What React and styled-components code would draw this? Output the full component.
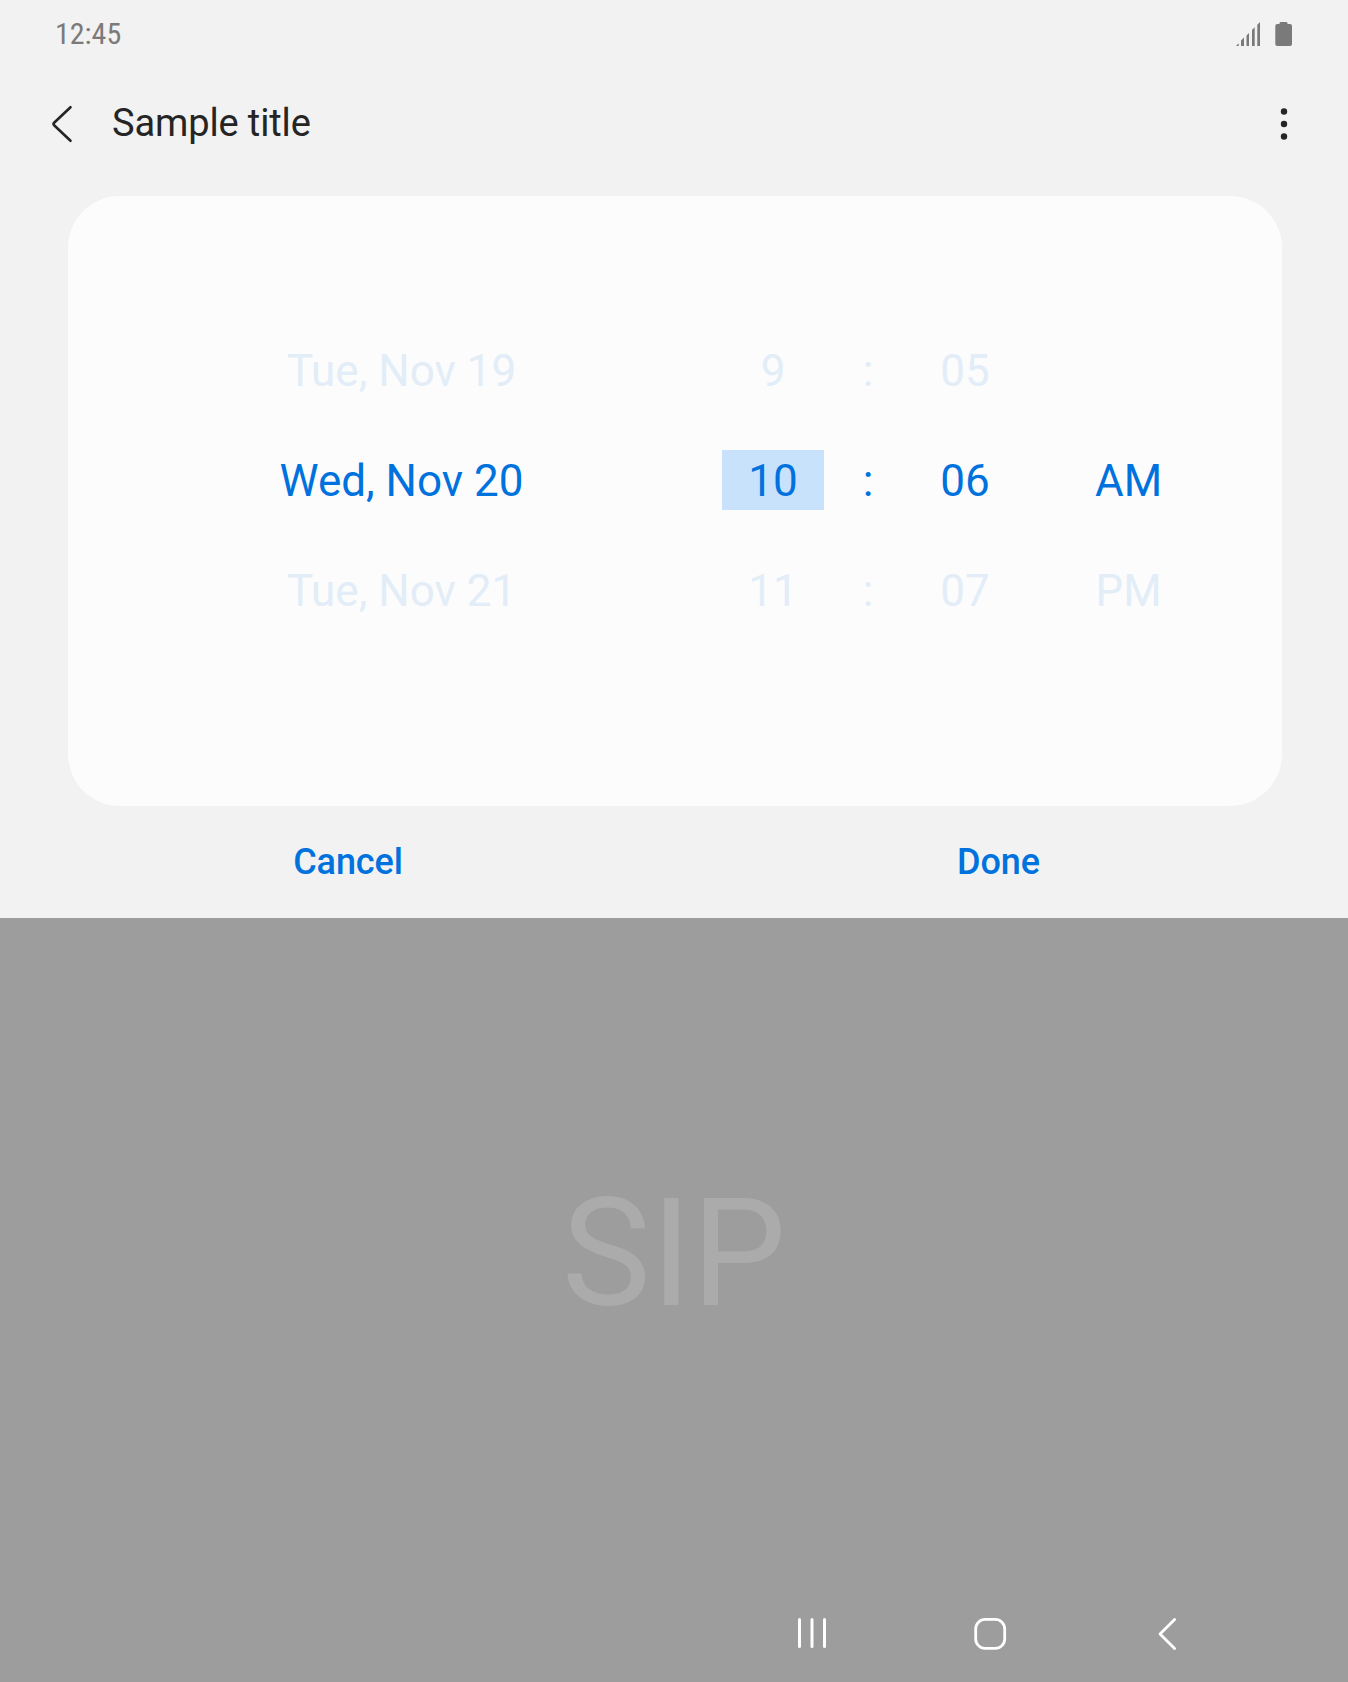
import React from "react";
import styled, { createGlobalStyle } from "styled-components";

const GlobalStyle = createGlobalStyle`
  *, *::before, *::after { box-sizing: border-box; }
  body { margin: 0; background: #9d9d9d; font-family: Roboto, sans-serif; }
  button { font: inherit; border: 0; background: none; padding: 0; color: inherit; }
`;

const Screen = styled.div`
  width: 1348px;
  height: 1682px;
  display: flex;
  flex-direction: column;
  overflow: hidden;
`;

const Sheet = styled.section`
  height: 918px;
  display: flex;
  flex-direction: column;
  background: #f2f2f2;
`;

const StatusBar = styled.div`
  height: 68px;
  padding: 0 56px 0 55px;
  display: flex;
  justify-content: space-between;
  align-items: center;
  color: #7a7a7a;
`;

const Clock = styled.span`
  font-family: "Roboto Condensed", Roboto, sans-serif;
  font-size: 30px;
  font-stretch: 75%;
  line-height: 68px;
`;

const StatusIcons = styled.div`
  display: flex;
  gap: 15px;
`;

const AppBar = styled.header`
  height: 128px;
  padding: 0 54px 16px 48px;
  display: flex;
  align-items: center;
  color: #252525;
`;

const Title = styled.h1`
  flex: 1;
  margin: -2px 0 0 36px;
  font-size: 38px;
  font-weight: 400;
  line-height: 112px;
  letter-spacing: -0.12px;
`;

const IconButton = styled.button`
  display: flex;
`;

const Icon = styled.svg`
  display: block;
  overflow: visible;
`;

const Card = styled.main`
  width: 1214px;
  height: 610px;
  margin-left: 68px;
  padding: 119px 0 0 13px;
  border-radius: 52px;
  background: #fcfcfc;
`;

const PickerRow = styled.div`
  height: 110px;
  display: grid;
  grid-template-columns: 641px 102px 88px 106px 221px;
  align-items: center;
  font-size: 44px;
  color: ${(p) => (p.$active ? "#0072de" : "#e2edf8")};
`;

const Cell = styled.div`
  height: 60px;
  line-height: 62px;
  text-align: center;
  white-space: nowrap;
  background: ${(p) => (p.$selected ? "#c9e2fc" : "transparent")};
`;

const Actions = styled.div`
  flex: 1;
  padding: 0 24px 0 23px;
  display: grid;
  grid-template-columns: 650px 1fr;
`;

const Action = styled.button`
  height: 112px;
  font-size: 36px;
  font-weight: 500;
  letter-spacing: ${(p) => p.$tracking || "normal"};
  color: #0072de;
`;

const Keyboard = styled.section`
  flex: 1;
  display: flex;
  flex-direction: column;
  background: #9d9d9d;
`;

const KeyboardLabel = styled.div`
  height: 668px;
  line-height: 672px;
  font-size: 150px;
  text-align: center;
  color: #ababab;
`;

const NavBar = styled.nav`
  height: 96px;
  padding-left: 798px;
  display: flex;
  gap: 148px;
  color: #fff;
`;

const rows = [
  { date: "Tue, Nov 19", hour: "9", minute: "05", period: "" },
  { date: "Wed, Nov 20", hour: "10", minute: "06", period: "AM", active: true },
  { date: "Tue, Nov 21", hour: "11", minute: "07", period: "PM" },
];

function SignalIcon() {
  return (
    <Icon width="24" height="24" viewBox="0 0 24 24" fill="currentColor">
      <path d="M0 24 2.7 21.3V24ZM5 24V18.5L8 15.5V24ZM10.5 24V13.5L13 11V24ZM16 24V8L18.7 5.3V24ZM21.3 24V2.7L24 0V24Z" />
    </Icon>
  );
}

function BatteryIcon() {
  return (
    <Icon width="17" height="24" viewBox="0 0 17 24" fill="currentColor">
      <path d="M5.5 0H11.5Q12.6 0 12.6 2H15Q17 2 17 4V22Q17 24 15 24H2.3Q.3 24 .3 22V4Q.3 2 2.3 2H4.4Q4.4 0 5.5 0Z" />
    </Icon>
  );
}

export default function App() {
  return (
    <Screen>
      <GlobalStyle />
      <Sheet>
        <StatusBar>
          <Clock>12:45</Clock>
          <StatusIcons>
            <SignalIcon />
            <BatteryIcon />
          </StatusIcons>
        </StatusBar>
        <AppBar>
          <IconButton aria-label="Back">
            <Icon width="28" height="40" viewBox="0 0 28 40" fill="none" stroke="currentColor" strokeWidth="2.6" strokeLinecap="round" strokeLinejoin="round">
              <path d="M22.5 3.2 6.1 18.8 Q4.8 20 6.1 21.2 L22.5 36.8" />
            </Icon>
          </IconButton>
          <Title>Sample title</Title>
          <IconButton aria-label="More options">
            <Icon width="20" height="40" viewBox="0 0 20 40" fill="currentColor">
              <circle cx="10" cy="7.5" r="3.2" />
              <circle cx="10" cy="20" r="3.2" />
              <circle cx="10" cy="32.5" r="3.2" />
            </Icon>
          </IconButton>
        </AppBar>
        <Card>
          {rows.map((r) => (
            <PickerRow key={r.date} $active={r.active}>
              <Cell>{r.date}</Cell>
              <Cell $selected={r.active}>{r.hour}</Cell>
              <Cell>:</Cell>
              <Cell>{r.minute}</Cell>
              <Cell>{r.period}</Cell>
            </PickerRow>
          ))}
        </Card>
        <Actions>
          <Action $tracking="-0.1px">Cancel</Action>
          <Action>Done</Action>
        </Actions>
      </Sheet>
      <Keyboard>
        <KeyboardLabel>SIP</KeyboardLabel>
        <NavBar>
          <Icon width="28" height="96" viewBox="0 0 28 96" stroke="currentColor" strokeWidth="3" strokeLinecap="round">
            <path d="M1.5 33.5V60.5M14 33.5V60.5M26.5 33.5V60.5" />
          </Icon>
          <Icon width="32" height="96" viewBox="0 0 32 96" fill="none" stroke="currentColor" strokeWidth="2.8">
            <rect x="1.7" y="33.4" width="29" height="29" rx="9.5" />
          </Icon>
          <Icon width="24" height="96" viewBox="0 0 24 96" fill="none" stroke="currentColor" strokeWidth="2.8" strokeLinecap="round" strokeLinejoin="round">
            <path d="M20.6 33.5 6 48 20.6 62.5" />
          </Icon>
        </NavBar>
      </Keyboard>
    </Screen>
  );
}
